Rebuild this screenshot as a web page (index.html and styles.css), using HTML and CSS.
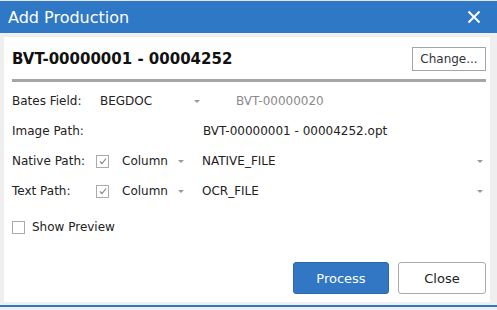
FILE: index.html
```html
<!DOCTYPE html>
<html>
<head>
<meta charset="utf-8">
<link rel="stylesheet" href="styles.css">
</head>
<body>
<div class="dialog">
  <div class="titlebar">
    <span class="title">Add Production</span>
    <svg class="close" width="14" height="14" viewBox="0 0 14 14"><path d="M1.5 1.5 L12.5 12.5 M12.5 1.5 L1.5 12.5" stroke="#fff" stroke-width="2" fill="none"/></svg>
  </div>
  <div class="panel">
    <div class="header">
      <span class="heading">BVT-00000001 - 00004252</span>
      <button class="btn-change">Change...</button>
    </div>
    <div class="rule"></div>
    <div class="row">
      <span class="label">Bates Field:</span>
      <span class="select bates">BEGDOC<i class="arrow"></i></span>
      <span class="muted">BVT-00000020</span>
    </div>
    <div class="row">
      <span class="label">Image Path:</span>
      <span class="imgval">BVT-00000001 - 00004252.opt</span>
    </div>
    <div class="row">
      <span class="label short">Native Path:</span>
      <span class="check checked"><svg width="10" height="10" viewBox="0 0 10 10"><path d="M2 5.5 L4 7.5 L8 2.5" stroke="#888" stroke-width="1.2" fill="none"/></svg></span>
      <span class="select col">Column<i class="arrow"></i></span>
      <span class="select wide">NATIVE_FILE<i class="arrow"></i></span>
    </div>
    <div class="row">
      <span class="label short">Text Path:</span>
      <span class="check checked"><svg width="10" height="10" viewBox="0 0 10 10"><path d="M2 5.5 L4 7.5 L8 2.5" stroke="#888" stroke-width="1.2" fill="none"/></svg></span>
      <span class="select col">Column<i class="arrow"></i></span>
      <span class="select wide">OCR_FILE<i class="arrow"></i></span>
    </div>
    <div class="row preview">
      <span class="check"></span>
      <span class="plabel">Show Preview</span>
    </div>
    <div class="footer">
      <button class="btn-process">Process</button>
      <button class="btn-close">Close</button>
    </div>
  </div>
  <div class="bottomline"></div>
</div>
</body>
</html>
```
FILE: styles.css
```css
html, body {
  margin: 0;
  padding: 0;
  background: #efefef;
  font-family: "DejaVu Sans", Verdana, sans-serif;
  font-size: 12px;
  color: #222;
}
.dialog {
  width: 497px;
  height: 310px;
  overflow: hidden;
}
.titlebar {
  border-top: 1px solid #e6e6e6;
  background: #2f78c5;
  display: flex;
  align-items: center;
  justify-content: space-between;
  padding: 0 16px 0 8px;
  box-sizing: border-box;
  height: 33px;
}
.title {
  color: #fff;
  font-size: 16px;
  font-family: "DejaVu Sans", sans-serif;
}
.close {
  display: block;
}
.panel {
  margin: 4px 7px 0 4px;
  background: #fff;
  height: 265px;
  padding: 0 4px 0 8px;
  box-sizing: border-box;
  display: flex;
  flex-direction: column;
}
.header {
  height: 40px;
  display: flex;
  align-items: center;
  justify-content: space-between;
  padding-top: 2px;
}
.heading {
  font-weight: bold;
  font-size: 15px;
  color: #111;
}
.btn-change {
  width: 74px;
  height: 24px;
  border: 1px solid #a5a5a5;
  background: #fff;
  font-family: inherit;
  font-size: 12px;
  color: #333;
  padding: 0;
  border-radius: 0;
}
.rule {
  height: 3px;
  background: #a6a6a6;
}
.row {
  display: flex;
  align-items: center;
  height: 30px;
}
.rule + .row { margin-top: 4px; }
.label {
  width: 88px;
  flex: none;
}
.label.short { width: 84px; }
.select {
  position: relative;
  flex: none;
}
.arrow {
  position: absolute;
  right: 0;
  top: 50%;
  margin-top: -1px;
  width: 0;
  height: 0;
  border-left: 3px solid transparent;
  border-right: 3px solid transparent;
  border-top: 3px solid #999;
}
.bates { width: 100px; }
.muted { color: #8a8a8a; margin-left: 36px; }
.imgval { margin-left: 103px; }
.check {
  width: 11px;
  height: 11px;
  border: 1px solid #aaa;
  flex: none;
  display: flex;
  align-items: center;
  justify-content: center;
  background: #fff;
}
.col { width: 62px; margin-left: 13px; }
.wide { width: 281px; margin-left: 18px; }
.preview { margin-top: 6px; }
.plabel { margin-left: 7px; }
.footer {
  margin-top: auto;
  display: flex;
  justify-content: flex-end;
  gap: 9px;
  padding-bottom: 8px;
}
.btn-process {
  width: 96px;
  height: 32px;
  background: #3177c4;
  border: 1px solid #2a68ad;
  border-radius: 3px;
  color: #fff;
  font-family: inherit;
  font-size: 13px;
}
.btn-close {
  width: 88px;
  height: 32px;
  background: #fff;
  border: 1px solid #aaa;
  border-radius: 3px;
  color: #222;
  font-family: inherit;
  font-size: 13px;
}
.bottomline {
  margin-top: 3px;
  height: 2px;
  background: #2f78c5;
}
```
